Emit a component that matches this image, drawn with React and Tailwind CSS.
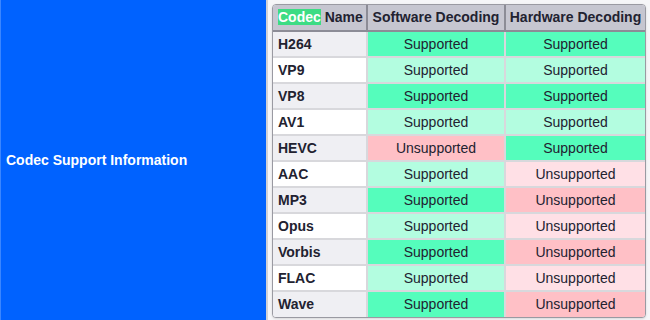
import React from 'react'

const rows = [
  ['H264', true, true],
  ['VP9', true, true],
  ['VP8', true, true],
  ['AV1', true, true],
  ['HEVC', false, true],
  ['AAC', true, false],
  ['MP3', true, false],
  ['Opus', true, false],
  ['Vorbis', true, false],
  ['FLAC', true, false],
  ['Wave', true, false],
]

const cellColor = (ok, odd) => {
  if (ok) return odd ? 'bg-[#55fdbc]' : 'bg-[#b3fde0]'
  return odd ? 'bg-[#ffc0c6]' : 'bg-[#ffe0e6]'
}

const App = () => {
  return (
    <div className="flex h-[320px] w-[650px] bg-[#f6f6f8] font-['Liberation_Sans',Arial,sans-serif] text-[14px] text-[#222230]">
      <div className="flex w-[268px] items-center border-r-2 border-[#d2d2d6] border-l border-l-[#3b86ff] bg-[#0062ff] px-[5px]">
        <h1 className="font-bold text-white">Codec Support Information</h1>
      </div>
      <div className="pl-[4px] pt-[4px]">
        <div className="w-[374px] overflow-hidden rounded-[4px] border border-[#9a9aa2] bg-white shadow-sm">
          <table className="w-full table-fixed border-collapse whitespace-nowrap">
            <colgroup>
              <col className="w-[94px]" />
              <col className="w-[138px]" />
              <col />
            </colgroup>
            <thead>
              <tr className="h-[26px] bg-[#c6c6d0]">
                <th className="border-b-2 border-r-2 border-[#8c8c96] pl-[5px] text-left font-bold">
                  <span className="bg-[#3ddc84] text-white">Codec</span> Name
                </th>
                <th className="border-b-2 border-r-2 border-[#8c8c96] font-bold">Software Decoding</th>
                <th className="border-b-2 border-[#8c8c96] font-bold">Hardware Decoding</th>
              </tr>
            </thead>
            <tbody>
              {rows.map(([name, sw, hw], i) => {
                const odd = i % 2 === 0
                const last = i === rows.length - 1
                return (
                  <tr key={name} className="h-[26px]">
                    <td className={`border-r-2 border-[#d8d8dc] pl-[5px] font-bold ${last ? '' : 'border-b-2'} ${odd ? 'bg-[#efeff3]' : 'bg-white'}`}>{name}</td>
                    <td className={`border-r-2 border-[#d8d8dc] text-center ${last ? '' : 'border-b-2'} ${cellColor(sw, odd)}`}>{sw ? 'Supported' : 'Unsupported'}</td>
                    <td className={`border-[#d8d8dc] text-center ${last ? '' : 'border-b-2'} ${cellColor(hw, odd)}`}>{hw ? 'Supported' : 'Unsupported'}</td>
                  </tr>
                )
              })}
            </tbody>
          </table>
        </div>
      </div>
    </div>
  )
}

export default App
